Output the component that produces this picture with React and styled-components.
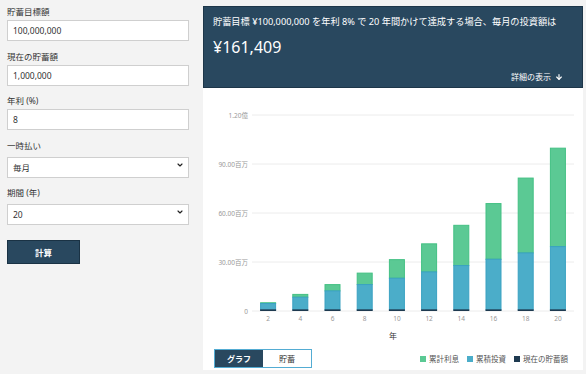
import React, { useState } from 'react';
import styled, { createGlobalStyle } from 'styled-components';
import { ArrowDown, ChevronDown } from 'lucide-react';

const GlobalStyle = createGlobalStyle`
  body {
    margin: 0;
    background: #f3f3f3;
    font-family: "Noto Sans", "Noto Sans CJK JP", sans-serif;
    color: #333;
  }
`;

const Page = styled.div`
  display: flex;
  width: 586px;
  height: 374px;
  overflow: hidden;
`;

const Sidebar = styled.aside`
  width: 182px;
  padding: 6px 7px;
  display: flex;
  flex-direction: column;
  gap: 9.5px;
`;

const Field = styled.div`
  display: flex;
  flex-direction: column;
`;

const Label = styled.label`
  font-size: 8.5px;
  line-height: 12px;
  margin-bottom: 2px;
  color: #333;
`;

const Input = styled.input`
  box-sizing: border-box;
  height: 21px;
  width: 100%;
  border: 1px solid #cfcfcf;
  background: #fff;
  padding: 0 5px;
  font: inherit;
  font-size: 8.5px;
  color: #333;
  outline: none;
`;

const SelectWrap = styled.div`
  position: relative;

  svg {
    position: absolute;
    right: 5px;
    top: 7px;
    pointer-events: none;
  }
`;

const Select = styled.select`
  box-sizing: border-box;
  height: 21px;
  width: 100%;
  border: 1px solid #cfcfcf;
  background: #fff;
  padding: 0 5px;
  font: inherit;
  font-size: 8.5px;
  color: #333;
  appearance: none;
  outline: none;
`;

const SubmitButton = styled.button`
  margin-top: 5.5px;
  width: 73px;
  height: 24px;
  background: #29485f;
  border: 1px solid #1a3244;
  color: #fff;
  font: inherit;
  font-size: 8.5px;
  font-weight: bold;
  cursor: pointer;
`;

const Main = styled.main`
  width: 380px;
  margin-left: 7px;
  padding-top: 6px;
  display: flex;
  flex-direction: column;
`;

const ResultBox = styled.section`
  box-sizing: border-box;
  height: 82px;
  background: #29485f;
  border: 1px solid #1d3649;
  color: #fff;
  padding: 9px 19px 4px 9px;
  display: flex;
  flex-direction: column;
`;

const ResultText = styled.p`
  margin: 0;
  font-size: 9.2px;
  line-height: 12px;
`;

const Amount = styled.div`
  margin-top: 9px;
  font-size: 16px;
  line-height: 20px;
`;

const Details = styled.div`
  margin-top: auto;
  align-self: flex-end;
  display: flex;
  align-items: center;
  gap: 4px;
  font-size: 8px;
  line-height: 12px;
`;

const ChartCard = styled.section`
  height: 282px;
  background: #fff;
  display: flex;
  flex-direction: column;
`;

const Footer = styled.div`
  display: flex;
  justify-content: space-between;
  align-items: center;
  padding: 9px 15px 0 11px;
`;

const Toggle = styled.div`
  display: flex;
  border: 1px solid #53acd3;
`;

const ToggleButton = styled.button`
  width: 48px;
  height: 17px;
  border: none;
  padding: 0;
  font: inherit;
  font-size: 8px;
  font-weight: ${p => (p.$active ? 'bold' : 'normal')};
  background: ${p => (p.$active ? '#29485f' : '#fff')};
  color: ${p => (p.$active ? '#fff' : '#333')};
  cursor: pointer;
`;

const Legend = styled.div`
  display: flex;
  gap: 8px;
  font-size: 7.5px;
  color: #555;
`;

const LegendItem = styled.span`
  display: flex;
  align-items: center;
  gap: 3px;

  &::before {
    content: '';
    width: 6px;
    height: 6px;
    background: ${p => p.$color};
  }
`;

const PMT = 161409;
const RATE = 0.08 / 12;
const START = 1000000;
const years = [2, 4, 6, 8, 10, 12, 14, 16, 18, 20];
const data = years.map(n => {
  const m = n * 12;
  const g = Math.pow(1 + RATE, m);
  const total = START * g + (PMT * (g - 1)) / RATE;
  const invest = PMT * m;
  return { n, invest, interest: total - START - invest };
});

const BASE = 223;
const SCALE = 196 / 120000000;
const LEFT = 49;
const RIGHT = 371;
const STEP = (RIGHT - LEFT) / 10;
const ticks = [
  [0, '0'],
  [30000000, '30.00百万'],
  [60000000, '60.00百万'],
  [90000000, '90.00百万'],
  [120000000, '1.20億'],
];

const Chart = () => (
  <svg width="380" height="252" style={{ display: 'block' }}>
    {ticks.map(([v, t]) => {
      const y = BASE - v * SCALE;
      return (
        <g key={t}>
          <line x1={LEFT} x2={RIGHT} y1={y} y2={y} stroke="#ececec" strokeWidth="1" />
          <text x="45" y={y + 2.5} fontSize="6.5" fill="#999" textAnchor="end">{t}</text>
        </g>
      );
    })}
    {data.map((d, i) => {
      const cx = LEFT + STEP * (i + 0.5);
      const x = cx - 8;
      const hBase = START * SCALE;
      const hInv = d.invest * SCALE;
      const hInt = d.interest * SCALE;
      return (
        <g key={d.n}>
          <rect x={x + 0.5} y={BASE - hBase - hInv - hInt + 0.5} width="15" height={hInt} fill="#5bc994" stroke="#43c083" strokeWidth="1" />
          <rect x={x + 0.5} y={BASE - hBase - hInv + 0.5} width="15" height={hInv} fill="#4badc9" stroke="#3aa2c2" strokeWidth="1" />
          <rect x={x} y={BASE - hBase} width="16" height={hBase} fill="#1e3a50" />
          <text x={cx} y="233" fontSize="6.5" fill="#999" textAnchor="middle">{d.n}</text>
        </g>
      );
    })}
    <text x="190" y="251" fontSize="8" fill="#333" textAnchor="middle">年</text>
  </svg>
);

export default function App() {
  const [view, setView] = useState('graph');
  return (
    <Page>
      <GlobalStyle />
      <Sidebar>
        <Field>
          <Label>貯蓄目標額</Label>
          <Input defaultValue="100,000,000" />
        </Field>
        <Field>
          <Label>現在の貯蓄額</Label>
          <Input defaultValue="1,000,000" />
        </Field>
        <Field>
          <Label>年利 (%)</Label>
          <Input defaultValue="8" />
        </Field>
        <Field>
          <Label>一時払い</Label>
          <SelectWrap>
            <Select defaultValue="monthly">
              <option value="monthly">毎月</option>
            </Select>
            <ChevronDown size={8} strokeWidth={3.5} color="#222" />
          </SelectWrap>
        </Field>
        <Field>
          <Label>期間 (年)</Label>
          <SelectWrap>
            <Select defaultValue="20">
              <option value="20">20</option>
            </Select>
            <ChevronDown size={8} strokeWidth={3.5} color="#222" />
          </SelectWrap>
        </Field>
        <SubmitButton>計算</SubmitButton>
      </Sidebar>
      <Main>
        <ResultBox>
          <ResultText>貯蓄目標 ¥100,000,000 を年利 8% で 20 年間かけて達成する場合、毎月の投資額は</ResultText>
          <Amount>¥161,409</Amount>
          <Details>
            詳細の表示
            <ArrowDown size={8} strokeWidth={3.5} />
          </Details>
        </ResultBox>
        <ChartCard>
          <Chart />
          <Footer>
            <Toggle>
              <ToggleButton $active={view === 'graph'} onClick={() => setView('graph')}>グラフ</ToggleButton>
              <ToggleButton $active={view === 'savings'} onClick={() => setView('savings')}>貯蓄</ToggleButton>
            </Toggle>
            <Legend>
              <LegendItem $color="#5bc994">累計利息</LegendItem>
              <LegendItem $color="#4badc9">累積投資</LegendItem>
              <LegendItem $color="#1e3a50">現在の貯蓄額</LegendItem>
            </Legend>
          </Footer>
        </ChartCard>
      </Main>
    </Page>
  );
}
